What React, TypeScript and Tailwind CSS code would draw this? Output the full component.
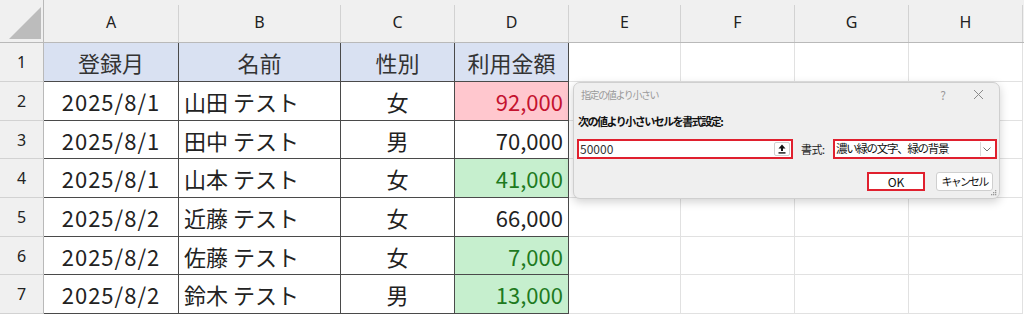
import React from "react";

const cols = ["A", "B", "C", "D", "E", "F", "G", "H"];
const rowHeights = ["h-[39px]", "h-[39px]", "h-[38px]", "h-[39px]", "h-[39px]", "h-[38px]", "h-[39px]"];

type Row = { a: string; b: string; c: string; d: string; kind: "red" | "green" | "none" };
const rows: Row[] = [
  { a: "2025/8/1", b: "山田 テスト", c: "女", d: "92,000", kind: "red" },
  { a: "2025/8/1", b: "田中 テスト", c: "男", d: "70,000", kind: "none" },
  { a: "2025/8/1", b: "山本 テスト", c: "女", d: "41,000", kind: "green" },
  { a: "2025/8/2", b: "近藤 テスト", c: "女", d: "66,000", kind: "none" },
  { a: "2025/8/2", b: "佐藤 テスト", c: "女", d: "7,000", kind: "green" },
  { a: "2025/8/2", b: "鈴木 テスト", c: "男", d: "13,000", kind: "green" },
];

const font = "font-['Noto_Sans_CJK_JP','Noto_Sans',sans-serif]";

function HeaderCell({ label }: { label: string }) {
  return (
    <div className="flex h-full bg-[#f0f0f0] border-b border-[#b9b9b9]">
      <div className="flex-1 flex items-center justify-center text-[16px] text-[#222] font-['Noto_Sans',sans-serif] pt-[1px]">
        {label}
      </div>
      <div className="w-px mt-[5px] bg-[#d2d2d2]" />
    </div>
  );
}

function Blank() {
  return <div className="h-full bg-white border-r border-b border-[#e1e1e1]" />;
}

export default function App() {
  const dClass = (k: Row["kind"]) =>
    k === "red"
      ? "bg-[#ffc7ce] text-[#c4122f]"
      : k === "green"
      ? "bg-[#c6efce] text-[#1e7a1e]"
      : "bg-white text-[#222]";

  return (
    <div className={`relative w-[1024px] h-[315px] bg-white overflow-hidden ${font}`}>
      <div className="grid grid-cols-[44px_135px_162px_114px_114px_112px_114px_114px_114px_1fr]">
        {/* header row */}
        <div className="h-[43px] bg-[#f0f0f0] border-r border-b border-[#b9b9b9] flex items-end justify-end pb-[3px] pr-[2px]">
          <svg width="32" height="32" viewBox="0 0 32 32">
            <polygon points="32,0 32,32 0,32" fill="#bcbcbc" />
          </svg>
        </div>
        {cols.map((c) => (
          <div key={c} className="h-[43px]">
            <HeaderCell label={c} />
          </div>
        ))}
        <div className="h-[43px] bg-[#f0f0f0] border-b border-[#b9b9b9]" />

        {/* row 1 */}
        <div className={`${rowHeights[0]} bg-[#f0f0f0] border-r border-[#b9b9b9] border-b border-b-[#d2d2d2] flex items-center justify-center text-[16px] text-[#222] font-['Noto_Sans',sans-serif]`}>
          1
        </div>
        {["登録月", "名前", "性別", "利用金額"].map((t) => (
          <div
            key={t}
            className="h-[39px] bg-[#d9e1f2] border-r border-b border-[#4a4a4a] flex items-center justify-center text-[22px] text-[#333] leading-none"
          >
            {t}
          </div>
        ))}
        {[0, 1, 2, 3].map((i) => (
          <Blank key={"r1" + i} />
        ))}
        <div className="bg-white" />

        {rows.map((r, i) => (
          <React.Fragment key={i}>
            <div className={`${rowHeights[i + 1]} bg-[#f0f0f0] border-r border-[#b9b9b9] border-b border-b-[#d2d2d2] flex items-center justify-center text-[16px] text-[#222] font-['Noto_Sans',sans-serif]`}>
              {i + 2}
            </div>
            <div className="bg-white border-r border-b border-[#4a4a4a] flex items-center justify-center text-[22px] tracking-[1px] text-[#222] leading-none">
              {r.a}
            </div>
            <div className="bg-white border-r border-b border-[#4a4a4a] flex items-center pl-[5px] text-[22px] text-[#222] leading-none">
              {r.b}
            </div>
            <div className="bg-white border-r border-b border-[#4a4a4a] flex items-center justify-center text-[22px] text-[#222] leading-none">
              {r.c}
            </div>
            <div className={`${dClass(r.kind)} border-r border-b border-[#4a4a4a] flex items-center justify-end pr-[5px] text-[22px] leading-none`}>
              {r.d}
            </div>
            {[0, 1, 2, 3].map((j) => (
              <Blank key={"b" + i + j} />
            ))}
            <div className="bg-white" />
          </React.Fragment>
        ))}
      </div>

      {/* dialog */}
      <div className="absolute left-[573px] top-[82px] w-[427px] h-[117px] bg-[#efefef] border border-[#cfcfcf] rounded-[7px] shadow-[0_3px_10px_rgba(0,0,0,0.18)] flex flex-col">
        <div className="mt-[3px] h-[17px] flex items-center pl-[7px]">
          <span className="text-[10px] tracking-[-1.4px] text-[#9a9a9a] whitespace-nowrap">指定の値より小さい</span>
          <span className="ml-auto text-[12px] text-[#9a9a9a] mr-[27px]">?</span>
          <svg width="11" height="11" viewBox="0 0 11 11" className="mr-[15px]">
            <path d="M1 1 L10 10 M10 1 L1 10" stroke="#8a8a8a" strokeWidth="1" />
          </svg>
        </div>
        <div className="mt-[10px] h-[16px] flex items-center pl-[4px]">
          <span className="text-[11px] tracking-[-1.5px] font-bold text-[#111] whitespace-nowrap">次の値より小さいセルを書式設定:</span>
        </div>
        <div className="mt-[10px] h-[20px] flex items-center pl-[3px]">
          <div className="w-[216px] h-[20px] border-2 border-[#e0202e] bg-white flex items-center pl-[1px] pr-[1px]">
            <span className="text-[12px] text-[#333]">50000</span>
            <div className="ml-auto w-[16px] h-[14px] bg-white border border-[#d0d0d0] rounded-[2px] flex items-center justify-center">
              <svg width="8" height="10" viewBox="0 0 8 10">
                <path d="M4 0.5 L7.5 4.5 L5 4.5 L5 7 L3 7 L3 4.5 L0.5 4.5 Z" fill="#111" />
                <rect x="0.5" y="8.2" width="7" height="1.4" fill="#111" />
              </svg>
            </div>
          </div>
          <span className="ml-[8px] w-[32px] text-[11px] tracking-[-0.5px] text-[#222] whitespace-nowrap">書式:</span>
          <div className="w-[164px] h-[20px] border-2 border-[#e0202e] bg-white flex items-center pl-[1px] pr-[2px]">
            <span className="text-[11.5px] tracking-[-1.3px] text-[#111] whitespace-nowrap">濃い緑の文字、緑の背景</span>
            <div className="ml-auto w-[13px] h-[14px] border-l border-[#d8d8d8] flex items-center justify-center">
              <svg width="8" height="5" viewBox="0 0 8 5">
                <path d="M0.5 0.5 L4 4 L7.5 0.5" stroke="#777" strokeWidth="1" fill="none" />
              </svg>
            </div>
          </div>
        </div>
        <div className="mt-[13px] h-[19px] flex items-center justify-end pr-[6px] gap-[11px]">
          <div className="w-[58px] h-[19px] border-2 border-[#e0202e] bg-white flex items-center justify-center text-[12px] text-[#111]">
            OK
          </div>
          <div className="w-[57px] h-[19px] border border-[#cfcfcf] rounded-[3px] bg-white flex items-center justify-center text-[11px] tracking-[-1.8px] text-[#111] whitespace-nowrap">
            キャンセル
          </div>
        </div>
        <div className="absolute right-[2px] bottom-[2px]">
          <svg width="6" height="6" viewBox="0 0 6 6">
            <rect x="4" y="0" width="1.3" height="1.3" fill="#999" />
            <rect x="2" y="2" width="1.3" height="1.3" fill="#999" />
            <rect x="4" y="2" width="1.3" height="1.3" fill="#999" />
            <rect x="0" y="4" width="1.3" height="1.3" fill="#999" />
            <rect x="2" y="4" width="1.3" height="1.3" fill="#999" />
            <rect x="4" y="4" width="1.3" height="1.3" fill="#999" />
          </svg>
        </div>
      </div>
    </div>
  );
}
